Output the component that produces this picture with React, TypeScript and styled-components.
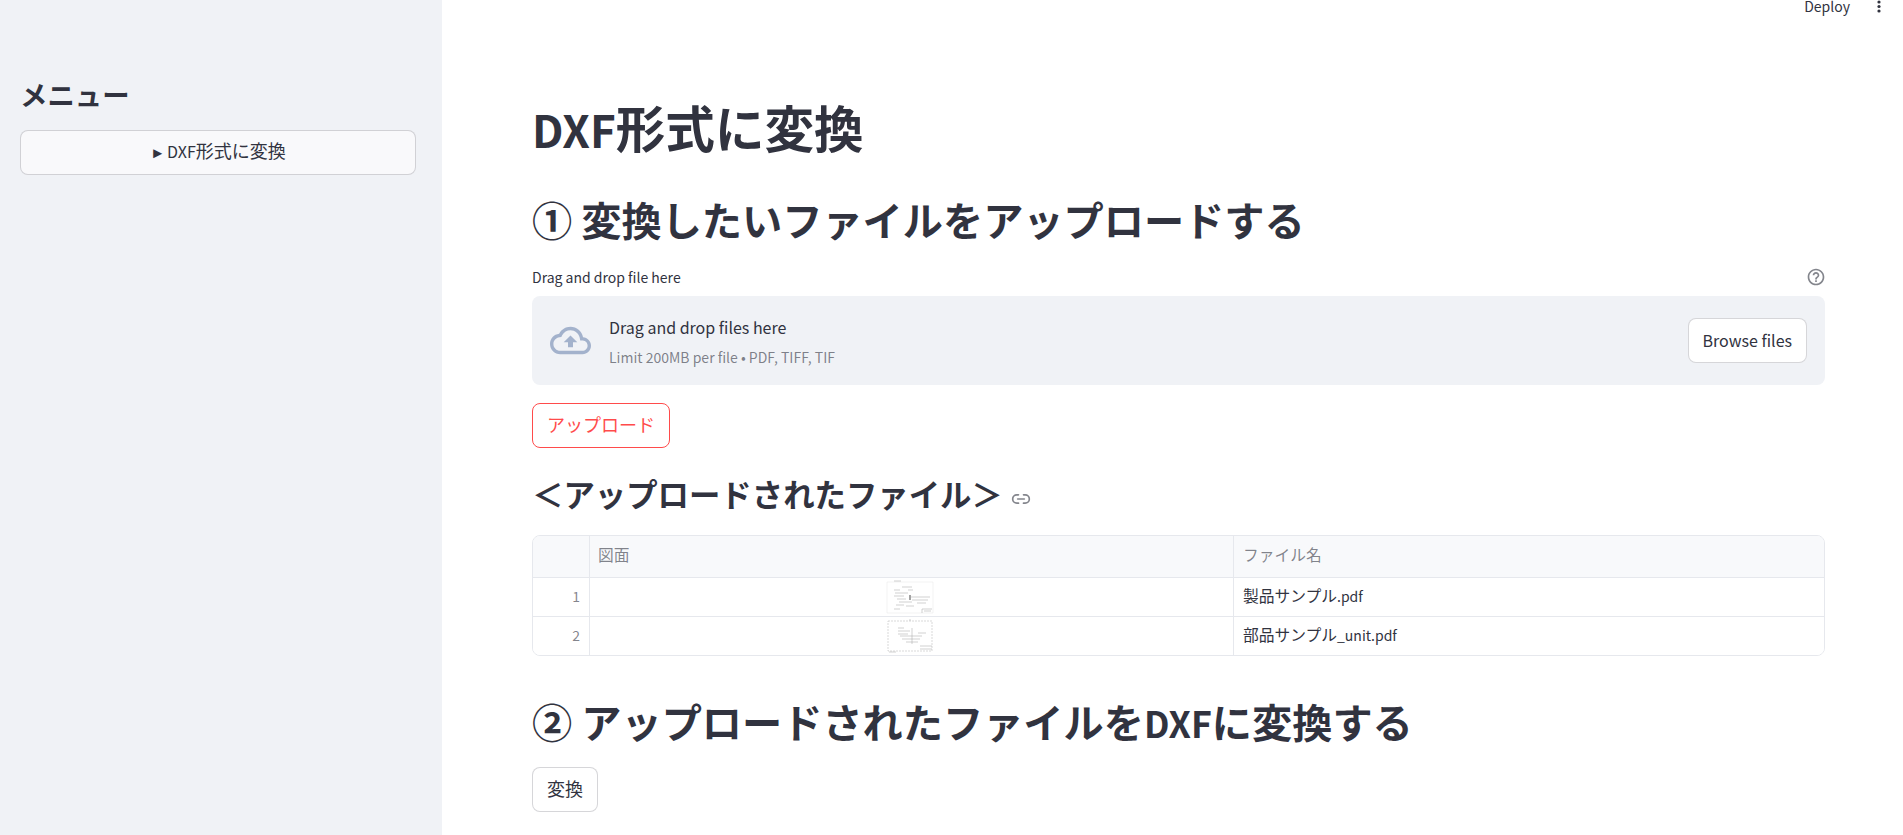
import styled, { createGlobalStyle } from "styled-components";
import { Link2 } from "lucide-react";

const GlobalStyle = createGlobalStyle`
  html, body {
    margin: 0;
    padding: 0;
    height: 100%;
    overflow: hidden;
    background: #ffffff;
    font-family: "Noto Sans CJK JP", "Noto Sans", sans-serif;
    color: #31333f;
  }
  * {
    box-sizing: border-box;
  }
`;

const Page = styled.div`
  display: flex;
  width: 1903px;
  height: 835px;
  overflow: hidden;
`;

const Sidebar = styled.aside`
  flex: 0 0 442px;
  background: #f0f2f6;
  padding: 74px 26px 0 20px;
`;

const SidebarTitle = styled.h2`
  margin: 0 0 16px;
  font-size: 27.4px;
  line-height: 40px;
  font-weight: 700;
`;

// latin letters run smaller than the kana and kanji next to them
const Latin = styled.span`
  font-size: 0.89em;
`;

const Arrow = styled.span`
  font-size: 15px;
  line-height: 0;
  margin-right: 2px;
`;

const Button = styled.button<{ $primary?: boolean; $tone?: string; $wide?: boolean; $lift?: number; $size?: number }>`
  display: block;
  width: ${(p) => (p.$wide ? "100%" : "auto")};
  height: 45px;
  padding: 0 14px ${(p) => p.$lift ?? 3}px;
  border-radius: 8px;
  border: 1px solid ${(p) => (p.$primary ? "#ff4b4b" : "rgba(49, 51, 63, 0.2)")};
  background: ${(p) => p.$tone ?? "#ffffff"};
  color: ${(p) => (p.$primary ? "#ff4b4b" : "#31333f")};
  font-family: inherit;
  font-size: ${(p) => p.$size ?? 18}px;
  line-height: 24px;
`;

const Main = styled.main`
  flex: 1;
  min-width: 0;
  padding: 0 78px 0 90px;
`;

const Header = styled.header`
  display: flex;
  justify-content: flex-end;
  align-items: center;
  height: 13px;
  margin: 0 -78px 0 0;
  padding-right: 18px;
  gap: 23px;
  font-size: 14px;
  line-height: 13px;
`;

const DotsIcon = styled.svg`
  flex: none;
  width: 12px;
  height: 13px;
  fill: #31333f;
`;

const Title = styled.h1`
  margin: 81px 0 0;
  font-size: 49.6px;
  line-height: 64px;
  font-weight: 700;
`;

const SectionTitle = styled.h2<{ $top: number }>`
  margin: ${(p) => p.$top}px 0 0;
  font-size: 40.2px;
  line-height: 60px;
  font-weight: 700;
`;

const LabelRow = styled.div`
  display: flex;
  justify-content: space-between;
  align-items: center;
  height: 20px;
  margin-top: 18px;
  font-size: 14px;
  line-height: 20px;
`;

const HelpIcon = styled.svg`
  width: 20px;
  height: 20px;
  margin-right: -1px;
  fill: rgba(49, 51, 63, 0.6);
`;

const Dropzone = styled.section`
  display: flex;
  align-items: center;
  height: 89px;
  margin-top: 9px;
  padding: 0 18px;
  border-radius: 8px;
  background: #f0f2f6;
`;

const CloudIcon = styled.svg`
  flex: none;
  width: 41px;
  height: 41px;
  fill: #a3b2cc;
`;

const DropText = styled.div`
  flex: 1;
  margin-left: 18px;
`;

const DropTitle = styled.div`
  font-size: 16px;
  line-height: 24px;
`;

const DropHint = styled.div`
  margin-top: 8px;
  font-size: 14px;
  line-height: 20px;
  color: rgba(49, 51, 63, 0.6);
`;

const UploadRow = styled.div`
  margin-top: 18px;
`;

const SubTitle = styled.h3`
  display: flex;
  align-items: center;
  margin: 24px 0 0;
  font-size: 31.4px;
  line-height: 44px;
  font-weight: 700;
  svg {
    margin: 10px 0 0 8px;
    color: rgba(49, 51, 63, 0.6);
  }
`;

const Table = styled.div`
  margin-top: 19px;
  border: 1px solid #e6e8ed;
  border-radius: 8px;
  overflow: hidden;
  font-size: 15.75px;
`;

const Row = styled.div<{ $head?: boolean }>`
  display: grid;
  grid-template-columns: 57px 644px 1fr;
  height: ${(p) => (p.$head ? "41px" : "39px")};
  background: ${(p) => (p.$head ? "#f8f9fb" : "#ffffff")};
  color: ${(p) => (p.$head ? "rgba(49, 51, 63, 0.6)" : "#31333f")};
  & + & {
    border-top: 1px solid #e6e8ed;
  }
`;

const Cell = styled.div<{ $center?: boolean; $end?: boolean; $muted?: boolean }>`
  display: flex;
  align-items: center;
  justify-content: ${(p) => (p.$center ? "center" : p.$end ? "flex-end" : "flex-start")};
  padding: 0 ${(p) => (p.$center ? 3 : p.$end ? 9 : 8)}px ${(p) => (p.$center ? 0 : 3)}px ${(p) => (p.$center ? 0 : 8)}px;
  border-right: 1px solid #e6e8ed;
  line-height: 20px;
  color: ${(p) => (p.$muted ? "rgba(49, 51, 63, 0.6)" : "inherit")};
  &:last-child {
    border-right: 0;
    padding-left: 9px;
  }
`;

const Index = styled.span`
  font-size: 14px;
`;

const Thumb = styled.svg`
  display: block;
  width: 48px;
  height: 35px;
  stroke: #8d8d8d;
  stroke-width: 0.5;
  fill: none;
  opacity: 0.8;
`;

const ConvertRow = styled.div`
  margin-top: 14px;
`;

const ThumbOne = () => (
  <Thumb viewBox="0 0 48 35">
    <path stroke="#e3e3e3" d="M1 2H47V33H1Z" />
    <path d="M8 1H15M16 7H26M8 10H14M22 10H27M9 13H22M8 16H18M24 17H44M11 19H20M26 20H42M13 22H26M31 23H40M10 25H18M20 26H28M8 29H14M36 29V33M36 29H46M38 31H45" />
    <path strokeWidth="2" d="M24 15V20" />
  </Thumb>
);

const ThumbTwo = () => (
  <Thumb viewBox="0 0 48 35">
    <path stroke="#a0a0a0" strokeDasharray="2 1" d="M2 2H46V32H2Z" />
    <path d="M12 9H18M12 12H24M12 15H22M14 17H36M16 20H34M20 23H32M26 9V25M32 14H40M34 27H46M34 30H46M3 33H10M24 0V2" />
  </Thumb>
);

const App = () => {
  return (
    <Page>
      <GlobalStyle />
      <Sidebar>
        <SidebarTitle>メニュー</SidebarTitle>
        <Button $wide $tone="#f9f9fb" $lift={5}><Arrow>►</Arrow><Latin>DXF</Latin>形式に変換</Button>
      </Sidebar>
      <Main>
        <Header>
          <span>Deploy</span>
          <DotsIcon viewBox="0 0 12 13">
            <circle cx="6" cy="2" r="1.6" />
            <circle cx="6" cy="6.5" r="1.6" />
            <circle cx="6" cy="11" r="1.6" />
          </DotsIcon>
        </Header>
        <Title><Latin>DXF</Latin>形式に変換</Title>
        <SectionTitle $top={28}>① 変換したいファイルをアップロードする</SectionTitle>
        <LabelRow>
          <span>Drag and drop file here</span>
          <HelpIcon viewBox="0 0 24 24">
            <path d="M11 18h2v-2h-2v2zm1-16C6.48 2 2 6.48 2 12s4.48 10 10 10 10-4.48 10-10S17.52 2 12 2zm0 18c-4.41 0-8-3.59-8-8s3.59-8 8-8 8 3.59 8 8-3.59 8-8 8zm0-14c-2.21 0-4 1.79-4 4h2c0-1.1.9-2 2-2s2 .9 2 2c0 2-3 1.75-3 5h2c0-2.25 3-2.5 3-5 0-2.21-1.79-4-4-4z" />
          </HelpIcon>
        </LabelRow>
        <Dropzone>
          <CloudIcon viewBox="0 0 24 24">
            <path d="M19.35 10.04C18.67 6.59 15.64 4 12 4 9.11 4 6.6 5.64 5.35 8.04 2.34 8.36 0 10.91 0 14c0 3.31 2.69 6 6 6h13c2.76 0 5-2.24 5-5 0-2.64-2.05-4.78-4.65-4.96zM19 18H6c-2.21 0-4-1.79-4-4 0-2.05 1.53-3.76 3.56-3.97l1.07-.11.5-.95C8.08 7.14 9.94 6 12 6c2.62 0 4.88 1.86 5.39 4.43l.3 1.5 1.53.11c1.56.1 2.78 1.41 2.78 2.96 0 1.65-1.35 3-3 3zM8 13h2.55v3h2.9v-3H16l-4-4z" />
          </CloudIcon>
          <DropText>
            <DropTitle>Drag and drop files here</DropTitle>
            <DropHint>Limit 200MB per file • PDF, TIFF, TIF</DropHint>
          </DropText>
          <Button $size={16} $lift={2}>Browse files</Button>
        </Dropzone>
        <UploadRow>
          <Button $primary>アップロード</Button>
        </UploadRow>
        <SubTitle>
          ＜アップロードされたファイル＞
          <Link2 size={20} strokeWidth={2} />
        </SubTitle>
        <Table>
          <Row $head>
            <Cell />
            <Cell>図面</Cell>
            <Cell>ファイル名</Cell>
          </Row>
          <Row>
            <Cell $end $muted><Index>1</Index></Cell>
            <Cell $center><ThumbOne /></Cell>
            <Cell>製品サンプル<Latin>.pdf</Latin></Cell>
          </Row>
          <Row>
            <Cell $end $muted><Index>2</Index></Cell>
            <Cell $center><ThumbTwo /></Cell>
            <Cell>部品サンプル<Latin>_unit.pdf</Latin></Cell>
          </Row>
        </Table>
        <SectionTitle $top={35}>② アップロードされたファイルを<Latin>DXF</Latin>に変換する</SectionTitle>
        <ConvertRow>
          <Button>変換</Button>
        </ConvertRow>
      </Main>
    </Page>
  );
};

export default App;
